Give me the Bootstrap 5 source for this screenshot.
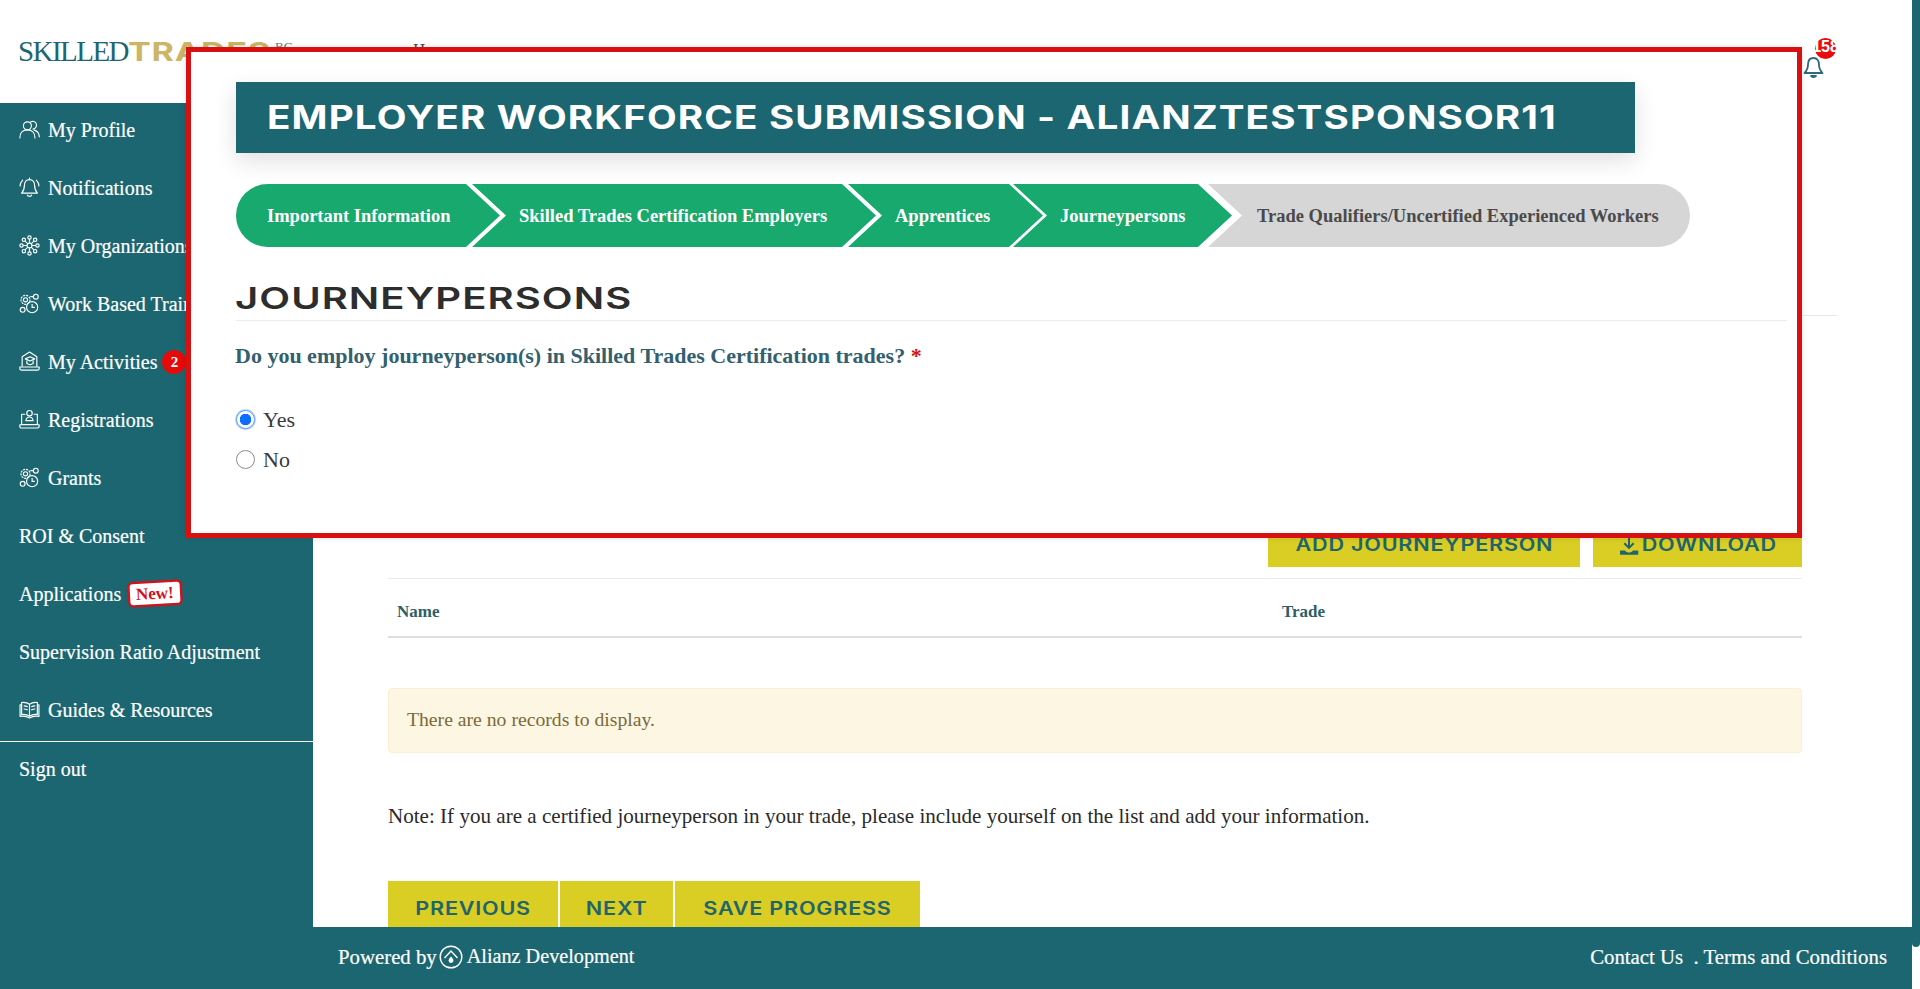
<!DOCTYPE html>
<html lang="en">
<head>
<meta charset="utf-8">
<title>Employer Workforce Submission</title>
<link href="https://cdn.jsdelivr.net/npm/bootstrap@5.3.0/dist/css/bootstrap.min.css" rel="stylesheet">
<style>
:root{--teal:#1c6671;--mustard:#dacd24;--green:#18a96e;}
html,body{height:989px;overflow:hidden;background:#fff;}
body{font-family:"Liberation Serif",serif;font-size:19px;color:#2b2b2b;}
.shell{height:989px;width:1920px;position:relative;}
.page-col{width:1912px;height:989px;}
.thumb-col{width:8px;}
.thumb{height:947px;background:var(--teal);border-radius:0 0 4px 4px;}
.top-head{height:103px;padding:0 88px 0 18px;flex:0 0 103px;}
.brand{width:395px;line-height:1;white-space:nowrap;}
.brand-a{font-size:29px;letter-spacing:-1.55px;color:var(--teal);}
.brand-b{display:inline-block;transform:scaleX(1.31);transform-origin:0 50%;font-family:Inter,sans-serif;font-weight:700;font-size:26px;letter-spacing:.6px;color:#cdb566;}
.brand-c{font-size:13px;color:#5f7f86;vertical-align:10px;margin-left:38px;}
.home-link{color:#444;text-decoration:none;font-size:17px;margin-top:-3px;}
.bell-wrap{margin-top:21px;width:21px;height:21px;}
.bell-count{position:absolute;left:12px;top:-14px;width:21px;height:21px;border-radius:50%;background:#e80c0c;color:#fff;font:700 16px/17px "Liberation Sans",sans-serif;display:flex;justify-content:center;}
.mid{flex:1 1 auto;min-height:0;}
.side{width:313px;flex:0 0 313px;background:var(--teal);}
.side-link{height:58px;padding:0 0 5px 19px;color:#fff;display:flex;align-items:center;gap:8px;text-decoration:none;font-size:20px;-webkit-text-stroke:.2px #fff;white-space:nowrap;}
.side-link svg{width:21px;height:21px;flex:none;}
.side-link:hover{color:#fff;}
.side-rule{border-top:1px solid #fff;}
.act-count{width:24px;height:24px;border-radius:50%;background:#e60a0a;color:#fff;font:700 15px/24px "Liberation Serif",serif;text-align:center;margin-left:-3px;-webkit-text-stroke:0;}
.new-tag{background:#fff;color:#d1121b;border:2px solid #d1121b;border-radius:5px;font:700 17px/21px "Liberation Serif",serif;padding:0 6px;transform:rotate(-3deg);margin-left:-1px;-webkit-text-stroke:0;box-shadow:0 0 2px #d1121b;}
.work{flex:1 1 auto;min-width:0;overflow:hidden;padding:0 110px 0 75px;}
.work-rule{height:1px;background:#e8e8e8;margin:212px -35px 0 0;}
.act-row{margin-top:211px;gap:13px;}
.wide-btn{background:var(--mustard);color:#21646c;border:0;border-radius:0;font:600 18px/40px Inter,sans-serif;letter-spacing:.65px;padding:0 0 4px;height:40px;text-transform:uppercase;display:flex;align-items:center;justify-content:center;gap:4px;}
.wide-btn:hover,.wide-btn:active{background:var(--mustard)!important;color:#21646c!important;}
.ext{display:inline-block;transform:scaleX(1.2);}
.ext-pad{margin:0 9px;}
.w-add{width:312px;}.w-down{width:209px;}
.w-down svg{margin:2px 1px 0 -2px;}
.rec-head{margin-top:11px;border-top:1px solid #e9e9e9;border-bottom:2px solid #dedede;height:60px;font-size:17px;font-weight:700;color:#2b5f69;padding-top:9px;}
.rec-head>div{padding-left:9px;}
.col-name{width:885px;}
.no-rec{margin:50px 0 0;height:65px;background:#fdf6e3;border:1px solid #f8efd4;border-radius:4px;color:#7b6a3a;font-size:19.7px;padding:0 18px 2px;display:flex;align-items:center;}
.note-line{margin:51px 0 0;line-height:24px;font-size:21.08px;color:#2a2a2a;white-space:nowrap;}
.nav-row{margin-top:53px;gap:2px;}
.nav-row .wide-btn{height:54px;padding:1px 0 0;font-size:18px;}
.w-prev{width:170px;}.w-next{width:113px;}.w-save{width:245px;}
.foot{flex:0 0 62px;height:62px;background:var(--teal);color:#fff;padding:0 25px 3px 25px;margin-left:313px;font-size:20.8px;-webkit-text-stroke:.2px #fff;box-shadow:-313px 0 0 var(--teal);}
.foot a{color:#fff;text-decoration:none;}
.foot svg{width:24px;height:24px;margin:0 4px 0 2px;}
.foot-brand{font-size:20.2px;}
.pop{position:absolute;left:186px;top:47px;width:1616px;height:491px;background:#fff;border:5px solid #d81010;padding:30px 10px 0 45px;box-shadow:0 0 6px rgba(0,0,0,.12);}
.pop-title{width:1399px;height:71px;background:var(--teal);color:#fff;font:700 32px/71px Inter,sans-serif;letter-spacing:.95px;padding-left:31px;white-space:nowrap;box-shadow:0 8px 22px rgba(0,0,0,.12);}
.pop-title span{display:inline-block;transform:scaleX(1.206);transform-origin:0 50%;}
.steps{margin-top:31px;height:63px;}
.step{height:63px;display:flex;align-items:center;flex:none;color:#fff;font-size:18.5px;font-weight:700;background:var(--green);white-space:nowrap;clip-path:polygon(0 0,calc(100% - 34px) 0,100% 50%,calc(100% - 34px) 100%,0 100%,34px 50%);margin-left:-28px;padding:2px 0 0 47px;}
.step-1{width:264px;margin-left:0;padding-left:31px;border-radius:32px 0 0 32px;clip-path:polygon(0 0,calc(100% - 34px) 0,100% 50%,calc(100% - 34px) 100%,0 100%);}
.step-2{width:404px;}
.step-3{width:195px;}
.step-4{width:219px;margin-left:-30px;}
.step-5{width:482px;background:#d6d6d6;color:#4a4a4a;border-radius:0 32px 32px 0;clip-path:polygon(0 0,100% 0,100% 100%,0 100%,34px 50%);margin-left:-24px;padding-left:49px;}
.pop-sub{font:600 30px/1 Inter,sans-serif;letter-spacing:.8px;color:#2d2d2d;margin:36px 0 0;padding-bottom:7px;border-bottom:1px solid #ededed;}
.pop-sub span{display:inline-block;transform:scaleX(1.335);transform-origin:0 50%;margin-left:-1px;}
.pop-ask{font-size:22px;font-weight:700;color:#33606e;margin:22px 0 0 -1px;line-height:26px;}
.pop-ask span{color:#d81010;}
.pick{margin-top:37px;}
.pick .form-check{margin:0 0 13px;padding-left:27px;min-height:0;height:27px;display:flex;align-items:center;}
.pick .form-check-input{width:19px;height:19px;margin:0 0 0 -27px;border-color:#8a8a8a;flex:none;}
.pick .form-check-input:checked{background-color:#fff;background-image:radial-gradient(circle,#0d6efd 0 46%,#fff 50% 100%);border:1.5px solid #5b9df9;box-shadow:0 0 0 1px #b6d3fd;}
.pick .form-check-label{font-size:22px;color:#3a3a3a;line-height:27px;margin-left:8px;}
</style>
</head>
<body>
<svg width="0" height="0" class="d-block position-absolute">
<defs>
<symbol id="i-people" viewBox="0 0 20 20" fill="none" stroke="#fff" stroke-width="1.1" stroke-linecap="round"><circle cx="8" cy="6.500" r="3.800"/><path d="M.8 18c0-4.800 3-7.600 7.200-7.600s7.200 2.800 7.200 7.600"/><path d="M11 2.800a3.700 3.700 0 1 1 2.400 6.800M14.600 10.600c2.900.9 4.700 3.400 4.700 6.400"/></symbol>
<symbol id="i-bell" viewBox="0 0 20 20" fill="none" stroke="#fff" stroke-width="1.1" stroke-linecap="round" stroke-linejoin="round"><path d="M10 2.500c-3 0-4.800 2.300-4.800 5.200 0 4-1.200 6-2.700 7.600h15c-1.500-1.600-2.700-3.600-2.700-7.600 0-2.900-1.800-5.200-4.800-5.200z"/><path d="M8 17.200c.4 1.600 3.600 1.600 4 0M10 2.500V1M3.500 3C2 4.500 1.200 6.300 1 8.500M16.500 3c1.500 1.500 2.300 3.300 2.500 5.500"/></symbol>
<symbol id="i-org" viewBox="0 0 20 20" fill="none" stroke="#fff" stroke-width="1.1"><circle cx="10" cy="10" r="2.300"/><circle cx="10" cy="2.400" r="1.600"/><circle cx="10" cy="17.600" r="1.600"/><circle cx="2.400" cy="10" r="1.600"/><circle cx="17.600" cy="10" r="1.600"/><circle cx="4.600" cy="4.600" r="1.600"/><circle cx="15.400" cy="4.600" r="1.600"/><circle cx="4.600" cy="15.400" r="1.600"/><circle cx="15.400" cy="15.400" r="1.600"/><path d="M10 4v3.700M10 16v-3.700M4 10h3.700M16 10h-3.700M5.800 5.800l2.600 2.600M14.200 5.800l-2.600 2.600M5.800 14.200l2.600-2.600M14.200 14.200l-2.600-2.600"/></symbol>
<symbol id="i-gear" viewBox="0 0 20 20" fill="none" stroke="#fff" stroke-width="1.1"><circle cx="6.200" cy="6.500" r="4.300" stroke-dasharray="2 .9"/><circle cx="6.200" cy="6.500" r="2"/><circle cx="16" cy="3.500" r="2.300"/><circle cx="3.500" cy="16" r="2.300"/><circle cx="12.500" cy="13.500" r="5.300"/><path d="M12.500 10.500v3.200h2.600M10.800 3.500h3"/></symbol>
<symbol id="i-study" viewBox="0 0 20 20" fill="none" stroke="#fff" stroke-width="1.1" stroke-linejoin="round"><path d="M3 15V5.500L10 1l7 4.500V15"/><path d="M6 7.500L10.500 5.500 15 7.500l-4.500 2z"/><path d="M7.500 9v3c2 1.200 4 1.200 6 0V9"/><path d="M.8 15.200h18.400v1.400c0 1-.6 1.600-1.600 1.600H2.400c-1 0-1.600-.6-1.600-1.600z"/></symbol>
<symbol id="i-reg" viewBox="0 0 20 20" fill="none" stroke="#fff" stroke-width="1.1" stroke-linejoin="round"><path d="M6 5H2.500v9.800h15V5H14"/><circle cx="10" cy="4" r="2.600"/><path d="M6.500 11c.5-2.300 1.800-3.400 3.500-3.400s3 1.100 3.500 3.400z"/><path d="M.8 15h18.400v1.500c0 1-.6 1.600-1.600 1.600H2.400c-1 0-1.600-.6-1.600-1.600z"/></symbol>
<symbol id="i-book" viewBox="0 0 20 20" fill="none" stroke="#fff" stroke-width="1.1" stroke-linejoin="round"><path d="M10 5C8 3.500 5 3 2.500 3.300v11.500C5 14.500 8 15 10 16.500c2-1.500 5-2 7.500-1.700V3.300C15 3 12 3.500 10 5zM10 5v11.500"/><path d="M2.500 5.500H1v11c3-.4 6.500 0 9 1.500 2.500-1.500 6-1.900 9-1.500v-11h-1.500M4.500 6.500c1.500 0 2.900.3 3.800 1M4.500 9.500c1.500 0 2.900.3 3.800 1M15.500 6.500c-1.500 0-2.900.3-3.800 1M15.500 9.500c-1.500 0-2.900.3-3.800 1"/></symbol>
</defs>
</svg>
<div class="shell d-flex">
  <div class="page-col d-flex flex-column">
    <header class="top-head d-flex align-items-center">
      <div class="brand"><span class="brand-a">SKILLED</span><span class="brand-b">TRADES</span><span class="brand-c">BC</span></div>
      <a class="home-link" href="#">Home</a>
      <div class="bell-wrap position-relative ms-auto">
        <svg viewBox="0 0 21 22" width="21" height="22" fill="none" stroke="#2e6a76" stroke-width="1.8" stroke-linejoin="round"><path d="M10.500 2C6.500 2 5 5 5 8.500c0 4-1.600 6.500-3.500 8.500h18c-1.900-2-3.500-4.500-3.500-8.500C16 5 14.500 2 10.500 2z"/><path d="M8 20h5l-2.500 1.500z" fill="#2e6a76"/></svg>
        <span class="bell-count">158</span>
      </div>
    </header>
    <div class="mid d-flex">
      <nav class="side nav flex-column flex-nowrap">
        <a class="side-link" href="#"><svg><use href="#i-people"/></svg>My Profile</a>
        <a class="side-link" href="#"><svg><use href="#i-bell"/></svg>Notifications</a>
        <a class="side-link" href="#"><svg><use href="#i-org"/></svg>My Organizations</a>
        <a class="side-link" href="#"><svg><use href="#i-gear"/></svg>Work Based Training</a>
        <a class="side-link" href="#"><svg><use href="#i-study"/></svg>My Activities<span class="act-count">2</span></a>
        <a class="side-link" href="#"><svg><use href="#i-reg"/></svg>Registrations</a>
        <a class="side-link" href="#"><svg><use href="#i-gear"/></svg>Grants</a>
        <a class="side-link" href="#">ROI &amp; Consent</a>
        <a class="side-link" href="#">Applications<span class="new-tag">New!</span></a>
        <a class="side-link" href="#">Supervision Ratio Adjustment</a>
        <a class="side-link" href="#"><svg><use href="#i-book"/></svg>Guides &amp; Resources</a>
        <div class="side-rule"></div>
        <a class="side-link" href="#">Sign out</a>
      </nav>
      <main class="work">
        <div class="work-rule"></div>
        <div class="act-row d-flex justify-content-end">
          <button class="btn wide-btn w-add"><span class="ext">Add Journeyperson</span></button>
          <button class="btn wide-btn w-down"><svg width="20" height="20" viewBox="0 0 20 20" fill="#21646c"><path d="M9 1h2v8.500l3-3 1.400 1.400L10 13.300 4.600 7.900 6 6.500l3 3z"/><path d="M1.500 14.500h4.500c1 1.500 2.500 2 4 2s3-.5 4-2h4.500c.5 0 .8.300.8.800v2.500c0 .6-.4 1-1 1H2c-.6 0-1-.4-1-1v-2.500c0-.5.200-.8.500-.8z"/></svg><span class="ext ext-pad">Download</span></button>
        </div>
        <div class="rec-head d-flex align-items-center">
          <div class="col-name">Name</div>
          <div>Trade</div>
        </div>
        <div class="alert no-rec" role="alert">There are no records to display.</div>
        <p class="note-line">Note: If you are a certified journeyperson in your trade, please include yourself on the list and add your information.</p>
        <div class="nav-row d-flex">
          <button class="btn wide-btn w-prev"><span class="ext">Previous</span></button>
          <button class="btn wide-btn w-next"><span class="ext">Next</span></button>
          <button class="btn wide-btn w-save"><span class="ext">Save Progress</span></button>
        </div>
      </main>
    </div>
    <footer class="foot d-flex align-items-center justify-content-between">
      <div class="d-flex align-items-center">Powered by<svg viewBox="0 0 24 24" fill="none" stroke="#fff" stroke-width="1.400"><circle cx="12" cy="12" r="10.800"/><path d="M5.500 13L12 6l6.500 7"/><path d="M12 11.500c1.600 1.800 2.400 2.900 2.400 4a2.400 2.400 0 0 1-4.800 0c0-1.100.8-2.200 2.400-4z" fill="#fff" stroke="none"/></svg><span class="foot-brand">Alianz Development</span></div>
      <div><a href="#">Contact Us</a> &nbsp;. <a href="#">Terms and Conditions</a></div>
    </footer>
  </div>
  <div class="thumb-col"><div class="thumb"></div></div>

  <section class="pop">
    <div class="pop-title"><span>EMPLOYER WORKFORCE SUBMISSION - ALIANZTESTSPONSOR11</span></div>
    <div class="steps d-flex">
      <div class="step step-1">Important Information</div>
      <div class="step step-2">Skilled Trades Certification Employers</div>
      <div class="step step-3">Apprentices</div>
      <div class="step step-4">Journeypersons</div>
      <div class="step step-5">Trade Qualifiers/Uncertified Experienced Workers</div>
    </div>
    <h2 class="pop-sub"><span>JOURNEYPERSONS</span></h2>
    <p class="pop-ask">Do you employ journeyperson(s) in Skilled Trades Certification trades? <span>*</span></p>
    <div class="pick">
      <div class="form-check"><input class="form-check-input" type="radio" name="emp" id="empY" checked><label class="form-check-label" for="empY">Yes</label></div>
      <div class="form-check"><input class="form-check-input" type="radio" name="emp" id="empN"><label class="form-check-label" for="empN">No</label></div>
    </div>
  </section>
</div>
<script src="https://cdn.jsdelivr.net/npm/bootstrap@5.3.0/dist/js/bootstrap.bundle.min.js"></script>
</body>
</html>
